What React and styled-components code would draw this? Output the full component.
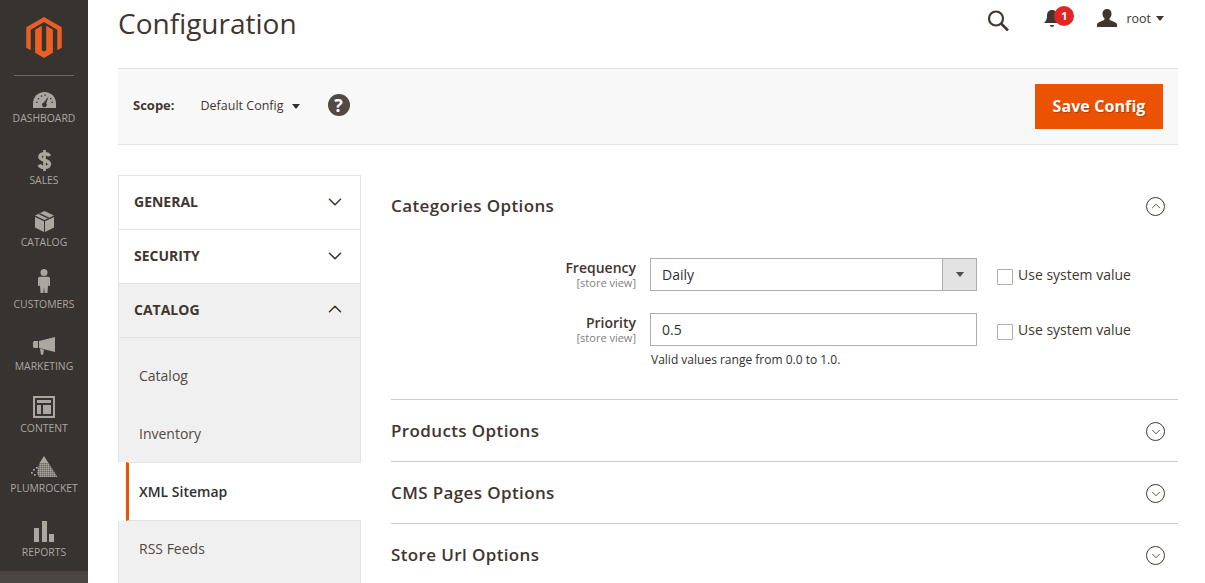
import React from "react";
import styled, { createGlobalStyle } from "styled-components";
import { ChevronDown, ChevronUp } from "lucide-react";

const GlobalStyle = createGlobalStyle`
  html, body {
    margin: 0;
    height: 100%;
    overflow: hidden;
    background: #fff;
    font-family: "Open Sans", "Liberation Sans", sans-serif;
    color: #303030;
  }
  * { box-sizing: border-box; }
`;

const Page = styled.div`
  display: flex;
  height: 583px;
  overflow: hidden;
`;

const Sidebar = styled.nav`
  width: 88px;
  flex: none;
  height: 583px;
  background: #373330;
  display: flex;
  flex-direction: column;
  align-items: stretch;
`;

const LogoBox = styled.div`
  height: 76px;
  margin: 0 14px;
  border-bottom: 1px solid #6b6663;
  display: flex;
  justify-content: center;
  padding-top: 17px;
`;

const NavItem = styled.a`
  height: ${(p) => p.$h || 62}px;
  flex: none;
  display: flex;
  flex-direction: column;
  align-items: center;
  justify-content: flex-end;
  padding-bottom: ${(p) => p.$pb ?? 13}px;
  color: #aaa6a0;
  font-size: 10.4px;
  line-height: 14px;
  text-transform: uppercase;
  svg { display: block; margin-bottom: ${(p) => p.$gap ?? 3}px; }
`;

const NavRest = styled.div`
  flex: 1;
  background: #4a4542;
`;

const Main = styled.main`
  flex: 1;
  min-width: 0;
  padding: 0 27px 0 30px;
`;

const Header = styled.header`
  height: 68px;
  display: flex;
  justify-content: space-between;
  align-items: flex-start;
`;

const Title = styled.h1`
  margin: 4px 0 0;
  font-size: 28px;
  line-height: 38px;
  font-weight: 400;
  color: #41362f;
`;

const Actions = styled.div`
  display: flex;
  align-items: center;
  height: 36px;
  margin-right: 14px;
`;

const SearchIcon = styled.svg`
  margin-top: 4px;
`;

const Bell = styled.div`
  position: relative;
  width: 16px;
  height: 20px;
  margin-left: 35px;
  margin-right: 37px;
  margin-top: 2px;
`;

const Badge = styled.span`
  position: absolute;
  left: 10px;
  top: -3px;
  width: 20px;
  height: 20px;
  border-radius: 50%;
  background: #e22626;
  color: #fff;
  font-size: 11px;
  font-weight: 700;
  line-height: 20px;
  text-align: center;
`;

const UserName = styled.span`
  font-size: 12.5px;
  color: #41362f;
  margin-left: 9px;
  margin-right: 5px;
`;

const Caret = styled.span`
  display: inline-block;
  width: 0;
  height: 0;
  border-left: 4.5px solid transparent;
  border-right: 4.5px solid transparent;
  border-top: 5px solid ${(p) => p.$color || "#41362f"};
`;

const ScopeBar = styled.div`
  height: 77px;
  background: #f8f8f8;
  border-top: 1px solid #e3e3e3;
  border-bottom: 1px solid #e3e3e3;
  display: flex;
  align-items: center;
  padding: 0 15px;
`;

const ScopeGroup = styled.div`
  display: flex;
  align-items: center;
  margin-bottom: 3px;
`;

const ScopeLabel = styled.span`
  font-size: 13px;
  font-weight: 700;
  color: #41362f;
  margin-right: 26px;
`;

const ScopeValue = styled.span`
  font-size: 12.5px;
  color: #41362f;
  margin-right: 8px;
`;

const ScopeCaret = styled(Caret)`
  margin-top: 3px;
`;

const Help = styled.span`
  width: 22px;
  height: 22px;
  border-radius: 50%;
  background: #514943;
  color: #fff;
  font-size: 18px;
  font-weight: 700;
  line-height: 22px;
  text-align: center;
  margin-left: 28px;
`;

const SaveButton = styled.button`
  margin-left: auto;
  width: 128px;
  height: 45px;
  padding: 0 0 2px;
  border: 0;
  background: #eb5202;
  color: #fff;
  font-family: inherit;
  font-size: 16px;
  font-weight: 700;
  letter-spacing: 0.1px;
  text-shadow: 1px 1px 1px rgba(0, 0, 0, 0.25);
`;

const Columns = styled.div`
  display: flex;
  gap: 30px;
  margin-top: 30px;
  align-items: flex-start;
`;

const Tabs = styled.div`
  width: 243px;
  flex: none;
`;

const TabHead = styled.div`
  height: ${(p) => p.$h || 54}px;
  border: 1px solid #e3e3e3;
  border-bottom: ${(p) => (p.$last ? "1px solid #e3e3e3" : "0")};
  background: ${(p) => (p.$open ? "#f0f0f0" : "#fff")};
  display: flex;
  align-items: center;
  justify-content: space-between;
  padding: 0 14px ${(p) => (p.$last ? 3 : 2)}px 15px;
  font-size: 14px;
  font-weight: 700;
  color: #41362f;
  text-transform: uppercase;
`;

const SubTab = styled.div`
  height: ${(p) => p.$h || 58}px;
  padding: ${(p) => p.$pt || 0}px 0 ${(p) => p.$pb || 0}px 20px;
  background: #f0f0f0;
  border-left: 1px solid #e3e3e3;
  border-right: 1px solid #e3e3e3;
  display: flex;
  align-items: center;
  font-size: 14px;
  color: #514943;
`;

const ActiveTab = styled.div`
  height: 59px;
  margin-left: 8px;
  padding: 0 0 1px 10px;
  background: #fff;
  border-left: 3px solid #eb5202;
  border-top: 1px solid #e3e3e3;
  border-bottom: 1px solid #e3e3e3;
  display: flex;
  align-items: center;
  font-size: 14px;
  font-weight: 600;
  color: #303030;
`;

const Sections = styled.div`
  flex: 1;
  min-width: 0;
`;

const SectionHead = styled.div`
  display: flex;
  justify-content: space-between;
  align-items: center;
  height: ${(p) => p.$h || 62}px;
  padding-right: 13px;
  font-size: 17px;
  font-weight: 600;
  letter-spacing: 0.38px;
  color: #41362f;
  border-top: ${(p) => (p.$first ? "0" : "1px solid #cccccc")};
`;

const CircleIcon = styled.span`
  width: 19px;
  height: 19px;
  margin-top: 2px;
  border: 1px solid #41362f;
  border-radius: 50%;
  display: flex;
  align-items: center;
  justify-content: center;
  color: #41362f;
`;

const Form = styled.div`
  padding-top: 23px;
  height: 164px;
`;

const Row = styled.div`
  display: grid;
  grid-template-columns: 245px 327px auto;
  column-gap: 14px;
  align-items: start;
  margin-bottom: 22px;
`;

const FieldLabel = styled.div`
  padding-top: 1px;
  text-align: right;
  font-size: 14px;
  font-weight: 600;
  line-height: 18px;
  color: #41362f;
  small {
    display: block;
    font-size: 11px;
    font-weight: 400;
    line-height: 12px;
    color: #808080;
  }
`;

const SelectBox = styled.div`
  height: 33px;
  border: 1px solid #adadad;
  display: flex;
  align-items: center;
  justify-content: space-between;
  padding-left: 11px;
  font-size: 14px;
  color: #303030;
`;

const SelectArrow = styled.span`
  width: 34px;
  height: 31px;
  background: #e3e3e3;
  border-left: 1px solid #adadad;
  display: flex;
  align-items: center;
  justify-content: center;
`;

const TextInput = styled.div`
  height: 33px;
  border: 1px solid #adadad;
  display: flex;
  align-items: center;
  padding-left: 11px;
  font-size: 14px;
  color: #303030;
`;

const Note = styled.div`
  margin: 6px 0 0 1px;
  font-size: 12px;
  line-height: 16px;
  color: #303030;
`;

const SystemValue = styled.label`
  display: flex;
  align-items: center;
  height: 33px;
  margin-left: 6px;
  font-size: 14px;
  color: #41362f;
`;

const Check = styled.span`
  width: 16px;
  height: 16px;
  border: 1px solid #adadad;
  border-radius: 1px;
  background: #fff;
  margin: 5px 5px 0 0;
`;

const nav = [
  {
    label: "Dashboard",
    icon: (
      <svg width="23" height="16" viewBox="0 0 23 16">
        <path fill="#aaa6a0" d="M0 16v-4.500C0 5 5 0 11.500 0S23 5 23 11.500V16z" />
        <path fill="#373330" d="M15.600 4.200l-2.400 7.300a2.300 2.300 0 1 1-2.300-.9z" />
        <g fill="#373330">
          <rect x="3.200" y="9.600" width="1.400" height="1.400" />
          <rect x="4.800" y="6" width="1.400" height="1.400" />
          <rect x="7.800" y="3.400" width="1.400" height="1.400" />
          <rect x="11.400" y="2.400" width="1.400" height="1.400" />
          <rect x="18.400" y="9.600" width="1.400" height="1.400" />
          <rect x="17" y="6" width="1.400" height="1.400" />
        </g>
      </svg>
    ),
  },
  {
    label: "Sales",
    gap: 2,
    icon: (
      <svg width="15" height="21" viewBox="0 0 14 23">
        <path
          fill="none"
          stroke="#aaa6a0"
          strokeWidth="3.800"
          d="M12.400 6.600C11.600 4.600 9.600 4 7 4 4.200 4 2 5.200 2 7.400c0 5 10.400 2.600 10.400 8 0 2.400-2.400 3.600-5.400 3.600-2.800 0-5-.8-5.800-3"
        />
        <rect x="5.500" y="0" width="3" height="23" fill="#aaa6a0" />
      </svg>
    ),
  },
  {
    label: "Catalog",
    icon: (
      <svg width="19" height="21" viewBox="0 0 19 21">
        <path fill="#aaa6a0" d="M9.500 0L19 4.500 9.500 9 0 4.500zM0 6l9 4.200V21l-9-4.500zM19 6v10.500L10 21V10.200z" />
        <path fill="#373330" d="M5 2.200l9.300 4.500-1.600.8-9.300-4.500z" />
      </svg>
    ),
  },
  {
    label: "Customers",
    gap: 4,
    icon: (
      <svg width="12" height="24" viewBox="0 0 12 24">
        <circle cx="6" cy="3.500" r="3.500" fill="#aaa6a0" />
        <path fill="#aaa6a0" d="M2 7.800h8c1.200 0 2 .8 2 2V17h-1.800v-4l-.7 11H6.600L6 18l-.6 6H2.500l-.7-11v4H0V9.800c0-1.200.8-2 2-2z" />
      </svg>
    ),
  },
  {
    label: "Marketing",
    gap: 4,
    icon: (
      <svg width="22" height="18" viewBox="0 0 22 18">
        <path fill="#aaa6a0" d="M22 0v15L6 11V4zM0 5.500C0 4.700.7 4 1.500 4H5v7H1.500C.7 11 0 10.300 0 9.500zM7 11.800l4 1-1 5H8z" />
      </svg>
    ),
  },
  {
    label: "Content",
    gap: 3,
    icon: (
      <svg width="22" height="22" viewBox="0 0 22 22">
        <path fill="#aaa6a0" fillRule="evenodd" d="M0 0h22v22H0zM2 2v18h18V2zM4 4h14v3H4zM4 9h4v9H4zM10 9h8v9h-8z" />
      </svg>
    ),
  },
  {
    label: "Plumrocket",
    h: 60,
    gap: 4,
    icon: (
      <svg width="28" height="21" viewBox="0 0 28 21">
        <defs>
          <pattern id="dots" width="2" height="2" patternUnits="userSpaceOnUse">
            <rect width="1.700" height="1.700" fill="#aaa6a0" />
          </pattern>
        </defs>
        <path fill="#aaa6a0" d="M14 0l4.500 7h-9z" />
        <path fill="url(#dots)" d="M9.500 7h9l9 14H9l-2-4z" />
        <g fill="#aaa6a0">
          <rect x="1" y="16" width="1.700" height="1.700" />
          <rect x="3" y="13" width="1.700" height="1.700" />
          <rect x="4" y="18" width="1.700" height="1.700" />
          <rect x="6" y="11" width="1.700" height="1.700" />
        </g>
      </svg>
    ),
  },
  {
    label: "Reports",
    h: 63,
    pb: 12,
    gap: 3,
    icon: (
      <svg width="20" height="21" viewBox="0 0 20 21">
        <path fill="#aaa6a0" d="M0 7h5v14H0zM8 0h5v21H8zM15 13h5v8h-5z" />
      </svg>
    ),
  },
];

export default function App() {
  return (
    <Page>
      <GlobalStyle />
      <Sidebar>
        <LogoBox>
          <svg width="36" height="41" viewBox="0 0 64 74">
            <path
              fill="#ec5f22"
              d="M32 0L64 18.500V55.500L56 60V23.100L32 9.200 8 23.100V60L0 55.500V18.500zM28 16V60L32 62.300 36 60V16L48 23V64.600L32 74 16 64.600V23z"
            />
          </svg>
        </LogoBox>
        {nav.map((n) => (
          <NavItem key={n.label} $h={n.h} $gap={n.gap} $pb={n.pb}>
            {n.icon}
            {n.label}
          </NavItem>
        ))}
        <NavRest />
      </Sidebar>
      <Main>
        <Header>
          <Title>Configuration</Title>
          <Actions>
            <SearchIcon width="22" height="21" viewBox="0 0 22 21">
              <circle cx="9" cy="8.500" r="7" fill="none" stroke="#41362f" strokeWidth="2.200" />
              <path d="M14 13.500l7 7" stroke="#41362f" strokeWidth="2.600" />
            </SearchIcon>
            <Bell>
              <svg width="16" height="20" viewBox="0 0 16 20">
                <path fill="#41362f" d="M8 1c3.500 0 5 2.500 5 6 0 3 1 5 3 7H0c2-2 3-4 3-7 0-3.500 1.500-6 5-6zM6 16h4a2 2 0 0 1-4 0z" />
              </svg>
              <Badge>1</Badge>
            </Bell>
            <svg width="20" height="18" viewBox="0 0 20 18">
              <path fill="#41362f" d="M10 0c2.800 0 4.500 2 4.500 4.800 0 2-.8 3.800-2.200 5 .2 1.200 1.600 1.700 3.500 2.400 2.500.9 4.200 1.800 4.200 3.300V18H0v-2.500c0-1.500 1.700-2.400 4.200-3.300 1.900-.7 3.300-1.200 3.500-2.400-1.400-1.200-2.200-3-2.200-5C5.500 2 7.200 0 10 0z" />
            </svg>
            <UserName>root</UserName>
            <Caret />
          </Actions>
        </Header>
        <ScopeBar>
          <ScopeGroup>
            <ScopeLabel>Scope:</ScopeLabel>
            <ScopeValue>Default Config</ScopeValue>
            <ScopeCaret $color="#303030" />
            <Help>?</Help>
          </ScopeGroup>
          <SaveButton>Save Config</SaveButton>
        </ScopeBar>
        <Columns>
          <Tabs>
            <TabHead>
              General
              <ChevronDown size={22} strokeWidth={1.7} />
            </TabHead>
            <TabHead>
              Security
              <ChevronDown size={22} strokeWidth={1.7} />
            </TabHead>
            <TabHead $open $last $h={55}>
              Catalog
              <ChevronUp size={22} strokeWidth={1.7} />
            </TabHead>
            <SubTab $h={66} $pt={8}>Catalog</SubTab>
            <SubTab $h={58} $pt={1}>Inventory</SubTab>
            <ActiveTab>XML Sitemap</ActiveTab>
            <SubTab $h={80} $pb={26}>RSS Feeds</SubTab>
          </Tabs>
          <Sections>
            <SectionHead $first $h={60}>
              Categories Options
              <CircleIcon>
                <ChevronUp size={14} strokeWidth={1.5} />
              </CircleIcon>
            </SectionHead>
            <Form>
              <Row>
                <FieldLabel>
                  Frequency
                  <small>[store view]</small>
                </FieldLabel>
                <SelectBox>
                  Daily
                  <SelectArrow>
                    <Caret $color="#514943" />
                  </SelectArrow>
                </SelectBox>
                <SystemValue>
                  <Check />
                  Use system value
                </SystemValue>
              </Row>
              <Row>
                <FieldLabel>
                  Priority
                  <small>[store view]</small>
                </FieldLabel>
                <div>
                  <TextInput>0.5</TextInput>
                  <Note>Valid values range from 0.0 to 1.0.</Note>
                </div>
                <SystemValue>
                  <Check />
                  Use system value
                </SystemValue>
              </Row>
            </Form>
            {["Products Options", "CMS Pages Options", "Store Url Options"].map((s) => (
              <SectionHead key={s}>
                {s}
                <CircleIcon>
                  <ChevronDown size={14} strokeWidth={1.5} />
                </CircleIcon>
              </SectionHead>
            ))}
          </Sections>
        </Columns>
      </Main>
    </Page>
  );
}
